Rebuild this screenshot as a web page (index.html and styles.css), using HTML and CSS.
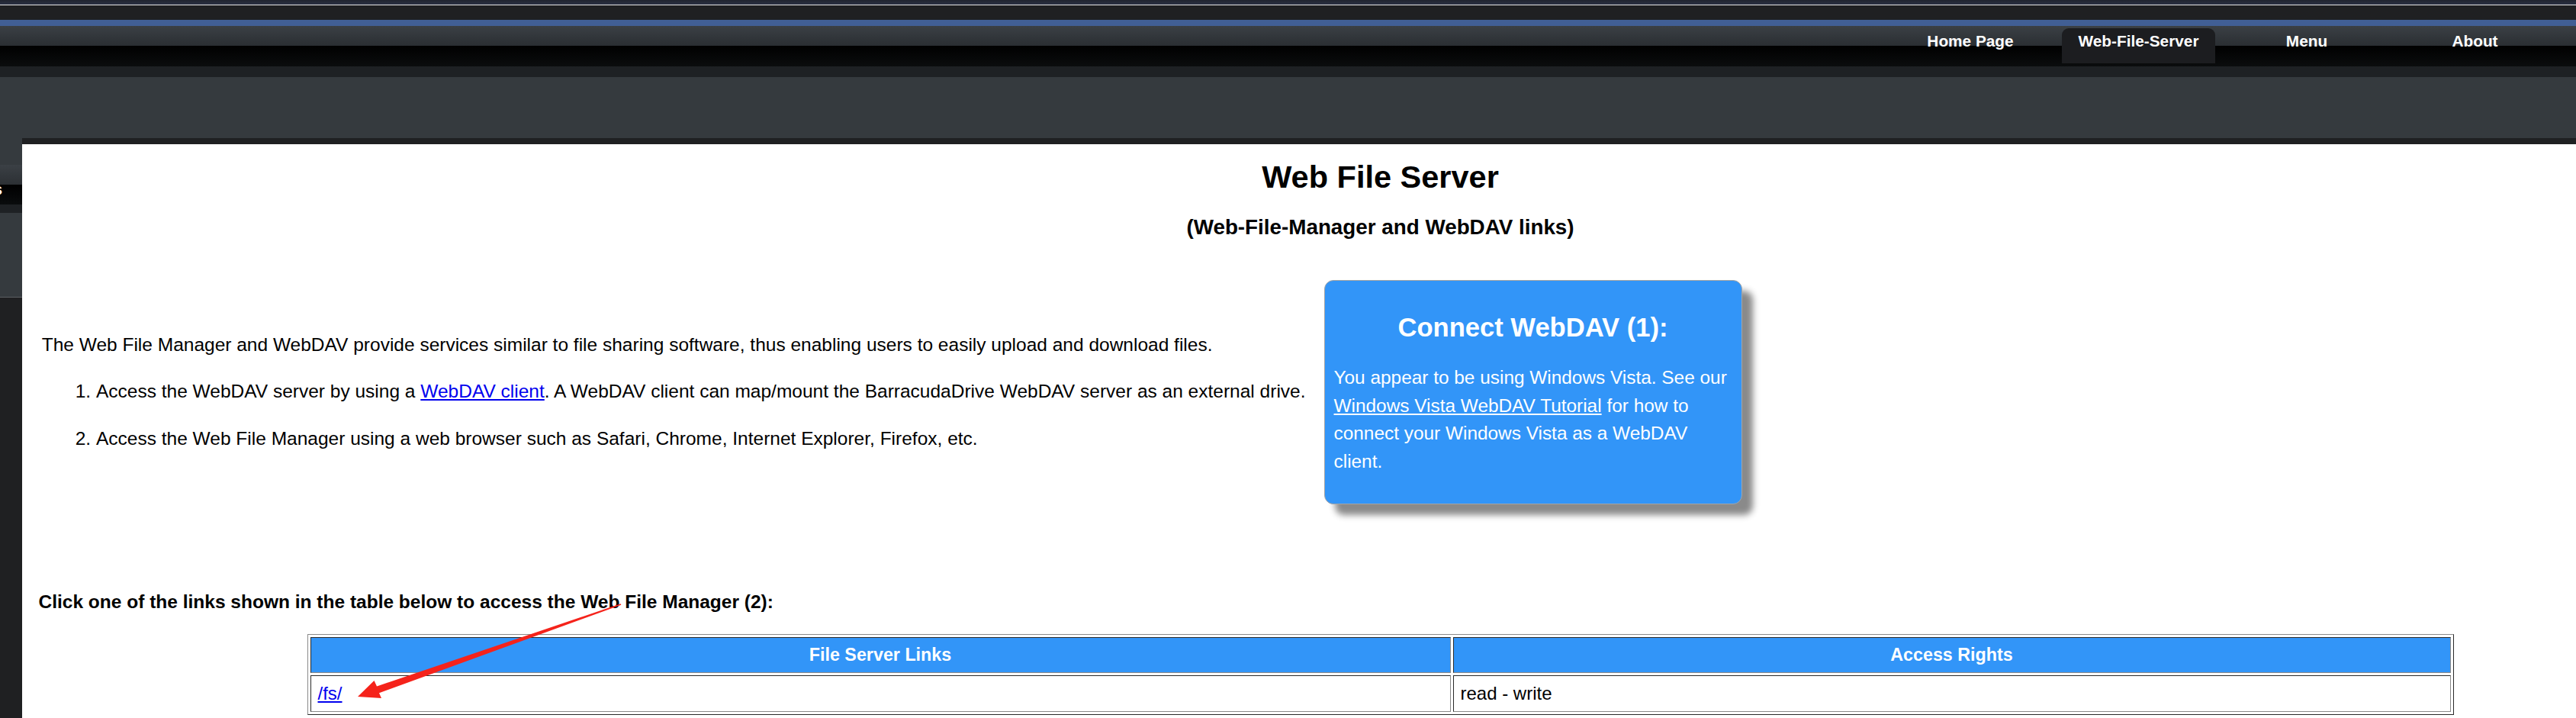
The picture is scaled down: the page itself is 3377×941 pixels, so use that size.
FILE: index.html
```html
<!DOCTYPE html>
<html lang="en">
<head>
<meta charset="utf-8">
<title>Web File Server</title>
<link rel="stylesheet" href="styles.css">
</head>
<body>
<header class="topbar">
  <nav class="nav">
    <a class="nav-item" href="#">Home Page</a>
    <a class="nav-item active" href="#">Web-File-Server</a>
    <a class="nav-item" href="#">Menu</a>
    <a class="nav-item" href="#">About</a>
  </nav>
</header>
<div class="page">
  <aside class="sidebar">
    <div class="sb-top"></div>
    <div class="sb-item"><span>Links</span></div>
    <div class="sb-gap"></div>
    <div class="sb-panel"></div>
    <div class="sb-rest"></div>
  </aside>
  <main class="content">
    <h1 class="title">Web File Server</h1>
    <h3 class="subtitle">(Web-File-Manager and WebDAV links)</h3>
    <div class="intro">
      <div class="intro-text">
        <p>The Web File Manager and WebDAV provide services similar to file sharing software, thus enabling users to easily upload and download files.</p>
        <ol class="steps">
          <li>Access the WebDAV server by using a <a href="#">WebDAV client</a>. A WebDAV client can map/mount the BarracudaDrive WebDAV server as an external drive.</li>
          <li>Access the Web File Manager using a web browser such as Safari, Chrome, Internet Explorer, Firefox, etc.</li>
        </ol>
      </div>
      <div class="connect-box">
        <h2 class="connect-title">Connect WebDAV (1):</h2>
        <p class="connect-text">You appear to be using Windows Vista. See our <a href="#">Windows Vista WebDAV Tutorial</a> for how to connect your Windows Vista as a WebDAV client.</p>
      </div>
    </div>
    <p class="click">Click one of the links shown in the table below to access the Web File Manager (2):</p>
    <table class="links">
      <tr>
        <th class="col-links">File Server Links</th>
        <th>Access Rights</th>
      </tr>
      <tr>
        <td><a href="#">/fs/</a></td>
        <td>read - write</td>
      </tr>
    </table>
  </main>
</div>
<svg class="arrow" width="3377" height="941" viewBox="0 0 3377 941" xmlns="http://www.w3.org/2000/svg">
  <polygon points="469,913 500,915 497,908.2 814.3,792.7 813.7,791.3 494,899.5 490.5,892" fill="#f5231b"/>
</svg>
</body>
</html>
```

FILE: styles.css
```css
html, body {
  margin: 0;
  padding: 0;
  overflow: hidden;
}

body {
  position: relative;
  width: 3377px;
  height: 941px;
  background: #1f2022;
  font-family: "Liberation Sans", Arial, sans-serif;
  color: #000;
}

.topbar {
  height: 181px;
  background: linear-gradient(to bottom,
    #20242f 0, #2b3144 6px,
    #e4e4e4 6px, #e4e4e4 7px,
    #1f2022 7px, #1f2022 26px,
    #415f95 26px, #415f95 34px,
    #3b4045 34px, #2a2e32 60px,
    #000 60px, #0b0d0e 87px,
    #1e2124 87px, #1e2124 101px,
    #353a3e 101px, #353a3e 181px);
}

.nav {
  display: flex;
  justify-content: flex-end;
  padding: 37px 32px 0 0;
}

.nav-item {
  width: 201px;
  height: 46px;
  box-sizing: border-box;
  padding-top: 5px;
  margin-left: 19.5px;
  text-align: center;
  font-weight: bold;
  font-size: 20.8px;
  color: #fff;
  text-decoration: none;
}

.nav-item.active {
  background: #1c1d20;
  border-radius: 9px 9px 0 0;
}

.page {
  display: flex;
  height: 760px;
}

.sidebar {
  width: 29px;
  flex: none;
  display: flex;
  flex-direction: column;
}

.sb-top {
  height: 35px;
  background: #353a3e;
}

.sb-item {
  height: 52px;
  box-sizing: border-box;
  padding: 20px 26px 0 0;
  display: flex;
  justify-content: flex-end;
  overflow: hidden;
  white-space: nowrap;
  background: linear-gradient(to bottom, #3b4045 0, #2c3034 26px, #000 26px, #0a0c0d 52px);
  color: #fff;
  font-weight: bold;
  font-size: 20.8px;
}

.sb-gap {
  height: 11px;
  background: #1e2124;
}

.sb-panel {
  height: 110px;
  background: #353a3e;
  border-bottom: 1px solid #5d6063;
}

.sb-rest {
  flex: 1;
  background: #1f2022;
}

.content {
  width: 3561px;
  flex: none;
  background: #fff;
  border-top: 8px solid #1f2022;
}

.title {
  margin: 19px 0 0;
  font-size: 41.5px;
  line-height: 48px;
  font-weight: bold;
  text-align: center;
}

.subtitle {
  margin: 26px 0 0;
  font-size: 27.8px;
  line-height: 32px;
  font-weight: bold;
  text-align: center;
}

.intro {
  display: flex;
  align-items: center;
  margin-top: 53px;
  padding-left: 25.7px;
}

.intro-text {
  flex: none;
  font-size: 24.5px;
  line-height: 36.5px;
}

.intro-text p {
  margin: 0;
}

.steps {
  margin: 24.4px 0 0;
  padding-left: 71.3px;
}

.steps li + li {
  margin-top: 25px;
}

.steps a {
  color: #0000ee;
}

.connect-box {
  flex: none;
  width: 548px;
  box-sizing: border-box;
  margin-left: 24px;
  padding: 12px;
  background: #3295f8;
  border: 1px solid #a4a4a4;
  border-radius: 12px;
  box-shadow: 14px 14px 8px #8a8a8a;
  color: #fff;
}

.connect-title {
  margin: 28.6px 0;
  font-size: 34.6px;
  line-height: 40px;
  font-weight: bold;
  text-align: center;
}

.connect-text {
  margin: 0 0 24.4px;
  font-size: 24.4px;
  line-height: 36.5px;
}

.connect-text a {
  color: #fff;
}

.click {
  margin: 110.5px 0 0 21.5px;
  font-size: 24.5px;
  line-height: 36.5px;
  font-weight: bold;
}

.links {
  width: 2814px;
  margin: 23.7px auto 0;
  border: 1px solid;
  border-color: #8a8a8a #2a2a2a #2a2a2a #8a8a8a;
  border-spacing: 3px;
}

.links th,
.links td {
  border: 1px solid;
  border-color: #2a2a2a #8a8a8a #8a8a8a #2a2a2a;
  padding: 9px;
}

.links th {
  background: #3295f8;
  color: #fff;
  font-size: 23.3px;
  font-weight: bold;
  text-align: center;
}

.links .col-links {
  width: 1475px;
}

.links td {
  font-size: 24px;
  text-align: left;
}

.links td a {
  color: #0000ee;
}

.arrow {
  position: absolute;
  left: 0;
  top: 0;
  pointer-events: none;
}
```
